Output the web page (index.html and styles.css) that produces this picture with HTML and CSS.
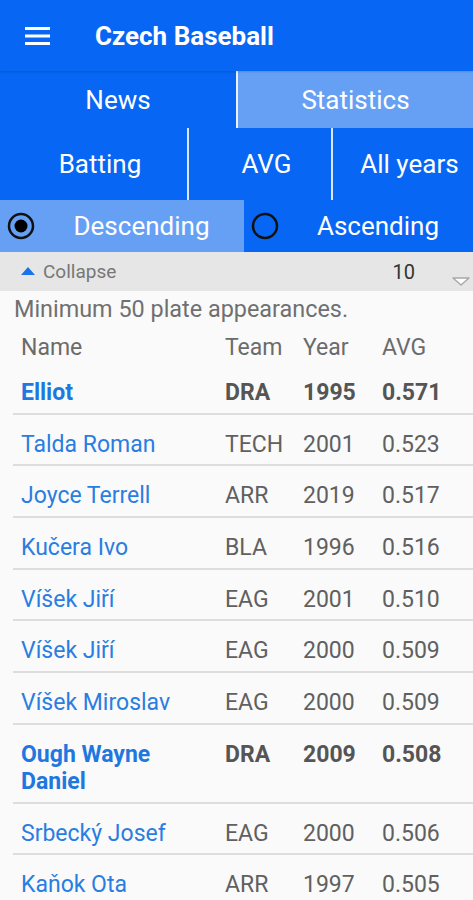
FILE: index.html
```html
<!DOCTYPE html>
<html lang="cs">
<head>
    <meta charset="utf-8">
    <title>Czech Baseball</title>
    <link rel="stylesheet" href="styles.css">
</head>
<body>
<header class="toolbar">
    <svg class="menu-icon" viewBox="0 0 25 18" fill="currentColor">
        <rect x="0" y="0" width="25" height="3"></rect>
        <rect x="0" y="7.5" width="25" height="3"></rect>
        <rect x="0" y="15" width="25" height="3"></rect>
    </svg>
    <span class="toolbar-title">Czech Baseball</span>
</header>

<nav class="tabs">
    <div class="tab">News</div>
    <div class="tab tab-active">Statistics</div>
</nav>

<div class="filters">
    <div class="filter filter-type">Batting</div>
    <div class="filter filter-stat">AVG</div>
    <div class="filter filter-year">All years</div>
</div>

<div class="order">
    <div class="order-option selected">
        <svg class="radio" viewBox="0 0 28 28">
            <circle cx="14" cy="14" r="12" fill="none" stroke="#111" stroke-width="2.5"></circle>
            <circle cx="14" cy="14" r="6.5" fill="#000"></circle>
        </svg>
        <span class="order-label">Descending</span>
    </div>
    <div class="order-option">
        <svg class="radio" viewBox="0 0 28 28">
            <circle cx="14" cy="14" r="12" fill="none" stroke="#111" stroke-width="2.5"></circle>
        </svg>
        <span class="order-label">Ascending</span>
    </div>
</div>

<div class="collapse-bar">
    <div class="collapse-toggle">
        <svg class="collapse-arrow" viewBox="0 0 14 8">
            <polygon points="0,8 7,0 14,8" fill="#1a73e8"></polygon>
        </svg>
        <span>Collapse</span>
    </div>
    <div class="page-size">
        <span class="page-size-value">10</span>
        <svg class="spinner-arrow" viewBox="0 0 18 9">
            <polygon points="1,1 17,1 9,8" fill="#fdfdfd" stroke="#a8a8a8" stroke-width="1.4" stroke-linejoin="round"></polygon>
        </svg>
    </div>
</div>

<main class="content">
    <p class="note">Minimum 50 plate appearances.</p>

    <div class="stats-table">
        <div class="stats-row stats-head">
            <span class="name">Name</span>
            <span>Team</span>
            <span>Year</span>
            <span>AVG</span>
        </div>
        <div class="stats-row highlight">
            <span class="name">Elliot</span>
            <span>DRA</span>
            <span>1995</span>
            <span>0.571</span>
        </div>
        <div class="stats-row">
            <span class="name">Talda Roman</span>
            <span>TECH</span>
            <span>2001</span>
            <span>0.523</span>
        </div>
        <div class="stats-row">
            <span class="name">Joyce Terrell</span>
            <span>ARR</span>
            <span>2019</span>
            <span>0.517</span>
        </div>
        <div class="stats-row">
            <span class="name">Kučera Ivo</span>
            <span>BLA</span>
            <span>1996</span>
            <span>0.516</span>
        </div>
        <div class="stats-row">
            <span class="name">Víšek Jiří</span>
            <span>EAG</span>
            <span>2001</span>
            <span>0.510</span>
        </div>
        <div class="stats-row">
            <span class="name">Víšek Jiří</span>
            <span>EAG</span>
            <span>2000</span>
            <span>0.509</span>
        </div>
        <div class="stats-row">
            <span class="name">Víšek Miroslav</span>
            <span>EAG</span>
            <span>2000</span>
            <span>0.509</span>
        </div>
        <div class="stats-row highlight">
            <span class="name">Ough Wayne Daniel</span>
            <span>DRA</span>
            <span>2009</span>
            <span>0.508</span>
        </div>
        <div class="stats-row">
            <span class="name">Srbecký Josef</span>
            <span>EAG</span>
            <span>2000</span>
            <span>0.506</span>
        </div>
        <div class="stats-row">
            <span class="name">Kaňok Ota</span>
            <span>ARR</span>
            <span>1997</span>
            <span>0.505</span>
        </div>
    </div>
</main>
</body>
</html>
```

FILE: styles.css
```css
:root {
    --blue: #0866f4;
    --blue-light: #66a0f5;
    --divider-white: rgba(255, 255, 255, 0.85);
    --bar-grey: #e6e6e6;
    --page-bg: #fafafa;
    --link: #2a7de1;
    --text-muted: #666666;
    --text-data: #606060;
    --row-line: #dddddd;
}

* {
    margin: 0;
    padding: 0;
    box-sizing: border-box;
}

html, body {
    overflow: hidden;
}

body {
    font-family: Roboto, "Noto Sans", sans-serif;
    background: var(--page-bg);
    color: var(--text-data);
    height: 900px;
}

/* toolbar */
.toolbar {
    display: flex;
    align-items: center;
    height: 71px;
    padding-left: 25px;
    background: var(--blue);
    color: #ffffff;
    box-shadow: 0 1px 2px rgba(0, 0, 0, 0.15);
    position: relative;
}

.menu-icon {
    width: 25px;
    height: 18px;
}

.toolbar-title {
    margin-left: 45px;
    font-size: 26px;
    font-weight: 700;
}

/* top tabs */
.tabs {
    display: flex;
    height: 57px;
    background: var(--blue);
    color: #ffffff;
    font-size: 26px;
}

.tab {
    display: flex;
    align-items: center;
    justify-content: center;
    width: 236px;
}

.tab-active {
    flex: 1;
    border-left: 2px solid var(--divider-white);
    background: var(--blue-light);
}

/* spinners row */
.filters {
    display: flex;
    height: 72px;
    background: var(--blue);
    color: #ffffff;
    font-size: 26px;
}

.filter {
    display: flex;
    align-items: center;
    justify-content: center;
    padding-left: 13px;
}

.filter-type {
    width: 187px;
}

.filter-stat {
    width: 144px;
    border-left: 2px solid var(--divider-white);
}

.filter-year {
    flex: 1;
    border-left: 2px solid var(--divider-white);
}

/* sort order */
.order {
    display: flex;
    height: 52px;
    background: var(--blue);
    color: #ffffff;
    font-size: 26px;
}

.order-option {
    display: flex;
    align-items: center;
    padding-left: 7px;
    flex: 1;
}

.order-option.selected {
    flex: none;
    width: 244px;
    background: var(--blue-light);
}

.radio {
    width: 28px;
    height: 28px;
}

.order-label {
    flex: 1;
    text-align: center;
    padding-left: 4px;
}

/* collapse bar */
.collapse-bar {
    display: flex;
    align-items: center;
    height: 39px;
    padding: 0 3px 0 21px;
    background: var(--bar-grey);
}

.collapse-toggle {
    display: flex;
    align-items: center;
    gap: 8px;
    font-size: 19px;
    color: #777777;
}

.collapse-arrow {
    width: 14px;
    height: 8px;
    margin-top: -2px;
}

.page-size {
    display: flex;
    align-items: center;
    margin-left: auto;
    align-self: stretch;
}

.page-size-value {
    font-size: 20px;
    color: #333333;
}

.spinner-arrow {
    width: 18px;
    height: 9px;
    margin-left: 37px;
    align-self: flex-end;
    margin-bottom: 5px;
}

/* statistics */
.content {
    padding-top: 5px;
}

.note {
    padding-left: 14px;
    margin-bottom: 11px;
    font-size: 23.4px;
    line-height: 27px;
    color: #707070;
}

.stats-table {
    margin-left: 13px;
}

.stats-row {
    display: grid;
    grid-template-columns: 204px 78px 79px 1fr;
    padding: 16px 0 6.7px 8px;
    border-bottom: 2px solid var(--row-line);
    font-size: 23px;
    line-height: 27px;
}

.stats-row .name {
    padding-right: 12px;
    color: var(--link);
}

.stats-head {
    padding: 0 0 2px 8px;
    border-bottom: none;
    color: #6b6b6b;
}

.stats-head .name {
    color: #6b6b6b;
}

.highlight {
    font-weight: 700;
    color: #555555;
}

.highlight .name {
    color: #1f77e0;
}
```
